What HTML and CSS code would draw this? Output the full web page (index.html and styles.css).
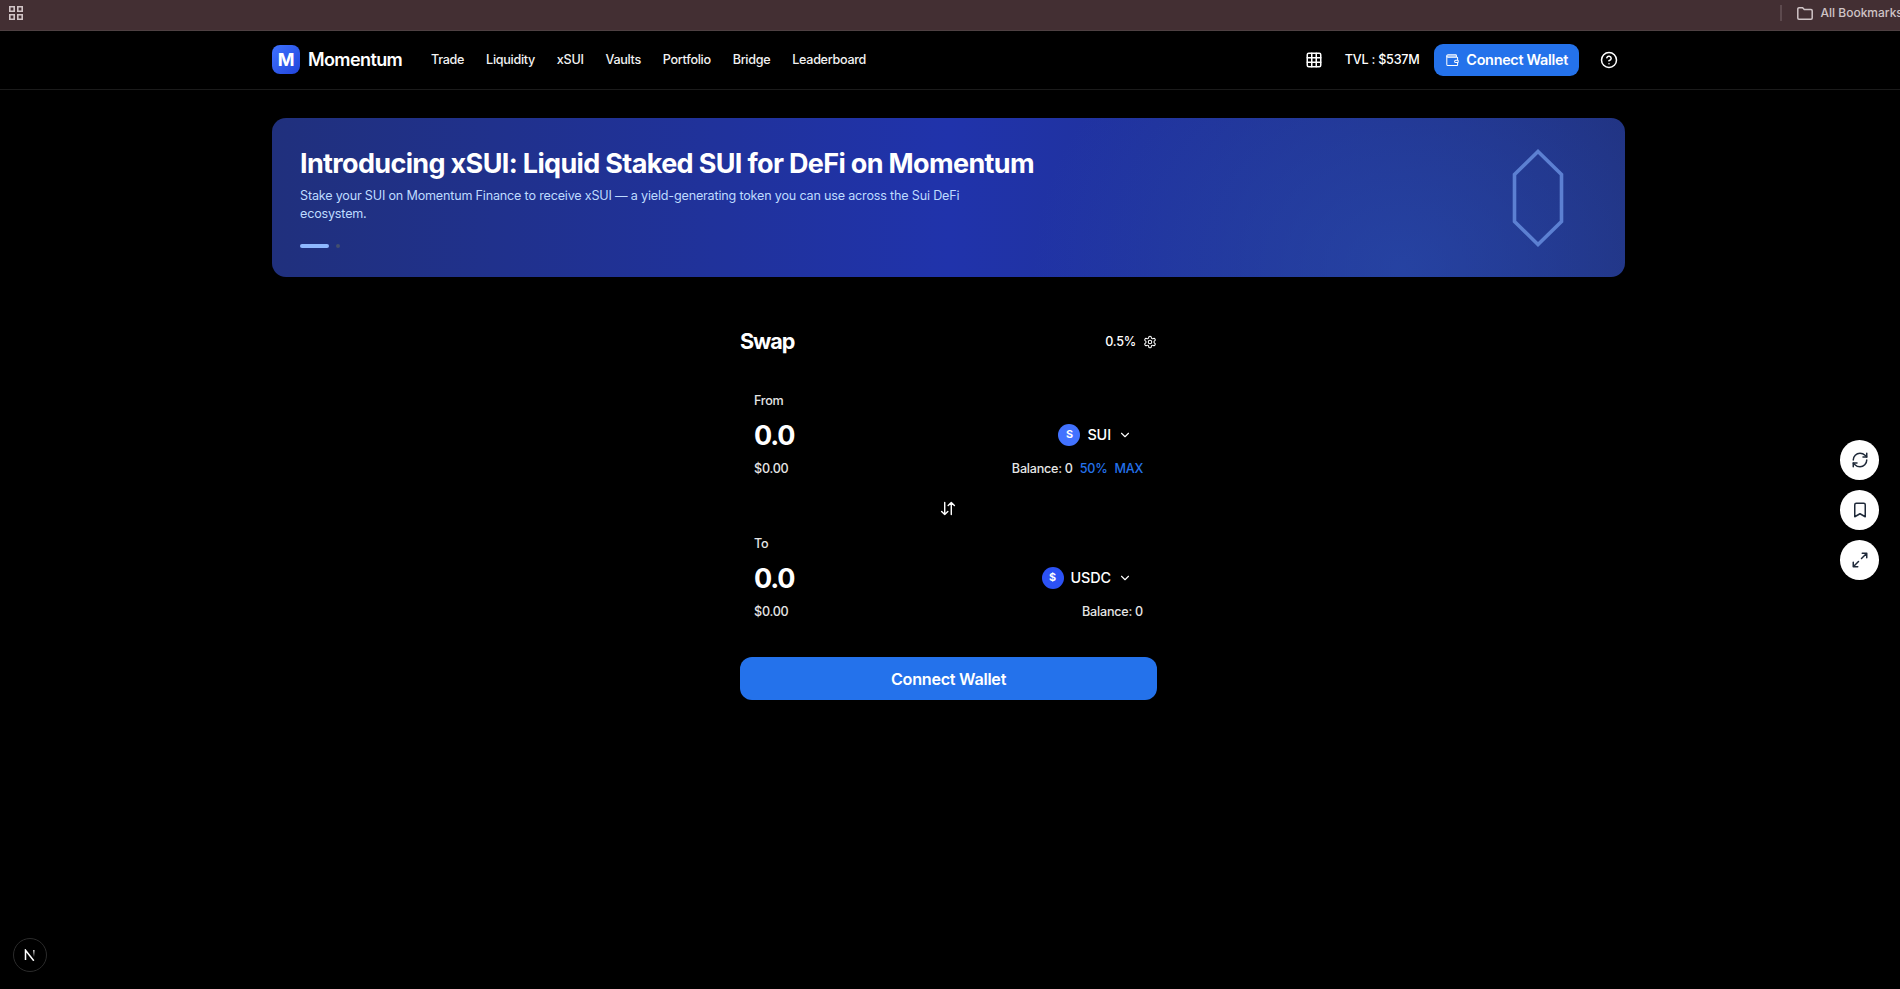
FILE: index.html
```html
<!DOCTYPE html>
<html lang="en">
<head>
<meta charset="utf-8">
<title>Momentum</title>
<link rel="stylesheet" href="styles.css">
</head>
<body>
<div class="bookmarks">
  <svg class="apps" viewBox="0 0 14 14" fill="none" stroke="#d2c5c7" stroke-width="1.6"><path d="M.8.8h4.4v4.4H.8zM8.8.8h4.4v4.4H8.8zM.8 8.8h4.4v4.4H.8zM8.8 8.8h4.4v4.4H8.8z"/></svg>
  <div class="all">
    <span class="sep"></span>
    <svg class="folder" viewBox="0 0 16 13" fill="none" stroke="#cfc4c6" stroke-width="1.5"><path d="M.8 2A1.2 1.2 0 0 1 2 .8h3.6l1.7 1.8H14A1.2 1.2 0 0 1 15.200 3.800V11a1.200 1.200 0 0 1-1.200 1.200H2A1.200 1.200 0 0 1 .8 11z"/></svg>
    <span class="all-label">All Bookmarks</span>
  </div>
</div>
<header class="header">
  <div class="wrap header-row">
    <div class="logo">M</div>
    <div class="brand">Momentum</div>
    <nav class="nav"><a>Trade</a><a>Liquidity</a><a>xSUI</a><a>Vaults</a><a>Portfolio</a><a>Bridge</a><a>Leaderboard</a></nav>
    <div class="tools">
      <svg class="icon grid-icon" viewBox="0 0 24 24"><rect x="3" y="3" width="18" height="18" rx="2"/><path d="M3 9h18M3 15h18M9 3v18M15 3v18"/></svg>
      <span class="tvl">TVL : $537M</span>
      <button class="connect"><svg class="icon wallet" viewBox="0 0 24 24"><path d="M4 3.500h15V7H4z" fill="currentColor" fill-opacity=".5" stroke="none"/><path d="M19 7V4a1 1 0 0 0-1-1H5a2 2 0 0 0 0 4h15a1 1 0 0 1 1 1v4h-3a2 2 0 0 0 0 4h3a1 1 0 0 0 1-1v-2a1 1 0 0 0-1-1"/><path d="M3 5v14a2 2 0 0 0 2 2h15a1 1 0 0 0 1-1v-4"/></svg><span class="connect-label">Connect Wallet</span></button>
      <svg class="icon help" viewBox="0 0 24 24"><circle cx="12" cy="12" r="10"/><path d="M9.090 9a3 3 0 0 1 5.830 1c0 2-3 3-3 3M12 17h.01"/></svg>
    </div>
  </div>
</header>
<main>
  <section class="wrap banner">
    <div class="banner-text">
      <h1>Introducing xSUI: Liquid Staked SUI for DeFi on Momentum</h1>
      <p>Stake your SUI on Momentum Finance to receive xSUI — a yield-generating token you can use across the Sui DeFi ecosystem.</p>
      <div class="dots"><i class="dot-active"></i><i class="dot"></i></div>
    </div>
    <svg class="hex" viewBox="0 0 52 98" fill="none" stroke="#5c80d2" stroke-width="3.600"><path d="M26 2.500 49.500 25.500V72.500L26 95.500 2.500 72.500V25.500z"/></svg>
  </section>
  <section class="swap">
    <div class="swap-head">
      <h2>Swap</h2>
      <div class="slippage">0.5%<svg class="icon gear" viewBox="0 0 24 24"><path d="M12.220 2h-.44a2 2 0 0 0-2 2v.18a2 2 0 0 1-1 1.730l-.43.25a2 2 0 0 1-2 0l-.15-.08a2 2 0 0 0-2.730.73l-.22.38a2 2 0 0 0 .73 2.730l.15.1a2 2 0 0 1 1 1.720v.51a2 2 0 0 1-1 1.740l-.15.09a2 2 0 0 0-.73 2.730l.22.38a2 2 0 0 0 2.730.73l.15-.08a2 2 0 0 1 2 0l.43.25a2 2 0 0 1 1 1.730V20a2 2 0 0 0 2 2h.44a2 2 0 0 0 2-2v-.18a2 2 0 0 1 1-1.730l.43-.25a2 2 0 0 1 2 0l.15.08a2 2 0 0 0 2.730-.73l.22-.39a2 2 0 0 0-.73-2.730l-.15-.08a2 2 0 0 1-1-1.740v-.5a2 2 0 0 1 1-1.740l.15-.09a2 2 0 0 0 .73-2.730l-.22-.38a2 2 0 0 0-2.730-.73l-.15.08a2 2 0 0 1-2 0l-.43-.25a2 2 0 0 1-1-1.730V4a2 2 0 0 0-2-2z"/><circle cx="12" cy="12" r="3"/></svg></div>
    </div>
    <div class="token-box">
      <div class="label">From</div>
      <div class="amount-row"><span class="amount">0.0</span><span class="token"><b class="coin sui">S</b>SUI<svg class="icon chevron" viewBox="0 0 24 24"><path d="m6 9 6 6 6-6"/></svg></span></div>
      <div class="foot"><span>$0.00</span><span class="balance">Balance: 0<a>50%</a><a>MAX</a></span></div>
    </div>
    <div class="flip"><svg class="icon" viewBox="0 0 16 16"><path d="M4.500 1.500v13M1.200 11.200l3.300 3.300 3.300-3.300M11.500 14.500v-13M8.200 4.800l3.300-3.300 3.300 3.300"/></svg></div>
    <div class="token-box">
      <div class="label">To</div>
      <div class="amount-row"><span class="amount">0.0</span><span class="token"><b class="coin usdc">$</b>USDC<svg class="icon chevron" viewBox="0 0 24 24"><path d="m6 9 6 6 6-6"/></svg></span></div>
      <div class="foot"><span>$0.00</span><span class="balance">Balance: 0</span></div>
    </div>
    <button class="submit">Connect Wallet</button>
  </section>
</main>
<div class="floating">
  <button><svg class="icon" viewBox="0 0 24 24"><path d="M3 12a9 9 0 0 1 9-9 9.750 9.750 0 0 1 6.740 2.740L21 8M21 12a9 9 0 0 1-9 9 9.750 9.750 0 0 1-6.740-2.740L3 16"/><path d="M21 3v5h-5M3 21v-5h5"/></svg></button>
  <button><svg class="icon" viewBox="0 0 24 24"><path d="m19 21-7-4-7 4V5a2 2 0 0 1 2-2h10a2 2 0 0 1 2 2z"/></svg></button>
  <button><svg class="icon" viewBox="0 0 24 24"><path d="M15 3h6v6M9 21H3v-6M21 3l-7 7M3 21l7-7"/></svg></button>
</div>
<div class="badge"><svg viewBox="0 0 12 12" fill="none" stroke-width="1.500"><defs><linearGradient id="fade" x1="0" y1="0" x2="0" y2="1"><stop offset="0" stop-color="#fff"/><stop offset="1" stop-color="#fff" stop-opacity="0"/></linearGradient></defs><path d="M1.500 11V1.200L9.800 11.800" stroke="#fff"/><rect x="9.200" y="1" width="1.300" height="7" fill="url(#fade)"/></svg></div>
</body>
</html>
```
FILE: styles.css
```css
* { box-sizing: border-box; }
body { margin: 0; height: 989px; overflow: hidden; background: #000; color: #fff; font: 500 12.6px/18px Inter, "Liberation Sans", sans-serif; letter-spacing: -.24px; }
button { border: 0; padding: 0; font-family: inherit; color: #fff; }
h1, h2, p { margin: 0; }
.icon { display: block; flex: none; fill: none; stroke: currentColor; stroke-width: 2; stroke-linecap: round; stroke-linejoin: round; }
.bookmarks { height: 31px; background: #432f33; border-bottom: 1px solid #4e4042; display: flex; justify-content: space-between; padding: 5px 0 0 9px; }
.apps { width: 14px; height: 14px; margin-top: 1px; }
.all { display: flex; width: 120.500px; height: 16px; white-space: nowrap; }
.sep { width: 2px; height: 16px; background: #5d4a4e; flex: none; }
.folder { width: 16px; height: 13px; margin: 2px 8px 0 15px; flex: none; }
.all-label { font-size: 12px; line-height: 16px; letter-spacing: 0; color: #cfc4c6; }
.wrap { width: 1353px; margin: 0 auto; position: relative; left: -1.500px; }
.header { height: 59px; border-bottom: 1px solid #1b1b1b; }
.header-row { height: 58px; display: flex; align-items: center; }
.logo { width: 28px; height: 29px; margin-bottom: 1px; border-radius: 8px; background: linear-gradient(135deg, #3f73ff, #2144db); font-size: 18px; font-weight: 700; display: grid; place-items: center; }
.brand { margin-left: 8px; font-size: 18px; font-weight: 600; letter-spacing: -.6px; width: 95px; }
.nav { display: flex; gap: 21.900px; margin-left: 28px; color: #f2f2f2; letter-spacing: -.3px; }
.tools { margin-left: auto; display: flex; align-items: center; padding-right: 7px; }
.grid-icon { width: 18px; height: 18px; margin-right: 22px; }
.tvl { margin-right: 14.500px; }
.connect { width: 145px; height: 32px; border-radius: 9px; background: #2472eb; font-size: 14.400px; font-weight: 600; letter-spacing: -.3px; display: flex; align-items: center; justify-content: center; gap: 7px; white-space: nowrap; }
.connect-label { padding-bottom: 1px; }
.wallet { width: 14.400px; height: 14.400px; stroke-width: 1.700; }
.help { width: 18px; height: 18px; margin-left: 21px; }
.banner { margin-top: 28px; height: 159px; border-radius: 14px; padding: 28px 61px 0 28px; display: flex; justify-content: space-between; background: radial-gradient(ellipse 370px 300px at 1130px 150px, rgba(42,78,176,.6), transparent), linear-gradient(90deg, #20307d, #2033ab 50%, #20307d); }
.banner-text { width: 760px; }
.banner h1 { padding-top: 1px; font-size: 27px; line-height: 34px; font-weight: 700; letter-spacing: -.655px; white-space: nowrap; }
.banner p { width: 690px; margin-top: 6px; font-weight: 400; letter-spacing: -.19px; color: #bedbff; }
.dots { display: flex; gap: 7px; margin-top: 21px; }
.dot-active { width: 29px; height: 4px; border-radius: 2px; background: #8eb8ff; }
.dot { width: 4px; height: 4px; border-radius: 2px; background: #434f6e; }
.hex { width: 52px; height: 98px; margin-top: 3px; }
.swap { width: 417px; margin: 48px auto 0; position: relative; left: -1.500px; }
.swap-head { height: 33px; display: flex; justify-content: space-between; align-items: center; }
.swap h2 { padding-bottom: 2px; font-size: 21.600px; line-height: 32px; font-weight: 700; letter-spacing: -1.100px; }
.slippage { display: flex; align-items: center; gap: 7px; }
.gear { width: 14px; height: 14px; stroke-width: 1.800; }
.token-box { height: 107px; padding: 0 14px; }
.swap-head + .token-box { margin-top: 34px; }
.label { line-height: 18px; color: #e5e5e5; }
.amount-row { height: 50px; padding-top: 1px; display: flex; align-items: center; justify-content: space-between; }
.amount { padding-top: 1px; font-size: 27px; font-weight: 700; letter-spacing: -1.200px; }
.token { display: flex; align-items: center; font-size: 14.400px; font-weight: 500; letter-spacing: -.1px; padding: 0 11px 2px 0; }
.coin { width: 22px; height: 22px; border-radius: 50%; margin-right: 7px; display: grid; place-items: center; font-size: 10.800px; font-weight: 700; letter-spacing: 0; }
.sui { background: #4272ff; }
.usdc { background: #2c52f5; }
.chevron { width: 14px; height: 14px; margin-left: 7px; stroke-width: 1.900; }
.foot { display: flex; justify-content: space-between; color: #e5e5e5; }
.balance { display: flex; gap: 7px; }
.balance a { color: #2472eb; }
.flip { display: flex; justify-content: center; padding: 2px 2px 19px 0; }
.flip .icon { width: 16px; height: 15px; stroke-width: 1.500; }
.submit { display: block; width: 417px; height: 43px; margin-top: 15px; border-radius: 12px; background: #2472eb; font-size: 16.200px; font-weight: 600; letter-spacing: -.28px; }
.floating { position: absolute; left: 1840px; top: 440px; display: grid; gap: 10.500px; }
.floating button { width: 39px; height: 39.500px; border-radius: 50%; background: #fff; color: #1e2939; display: grid; place-items: center; }
.floating .icon { width: 18px; height: 18px; }
.badge { position: absolute; left: 13px; top: 938px; width: 34px; height: 34px; border-radius: 50%; border: 1.500px solid #2b2b2b; display: grid; place-items: center; }
.badge svg { width: 12px; height: 12px; }
```
